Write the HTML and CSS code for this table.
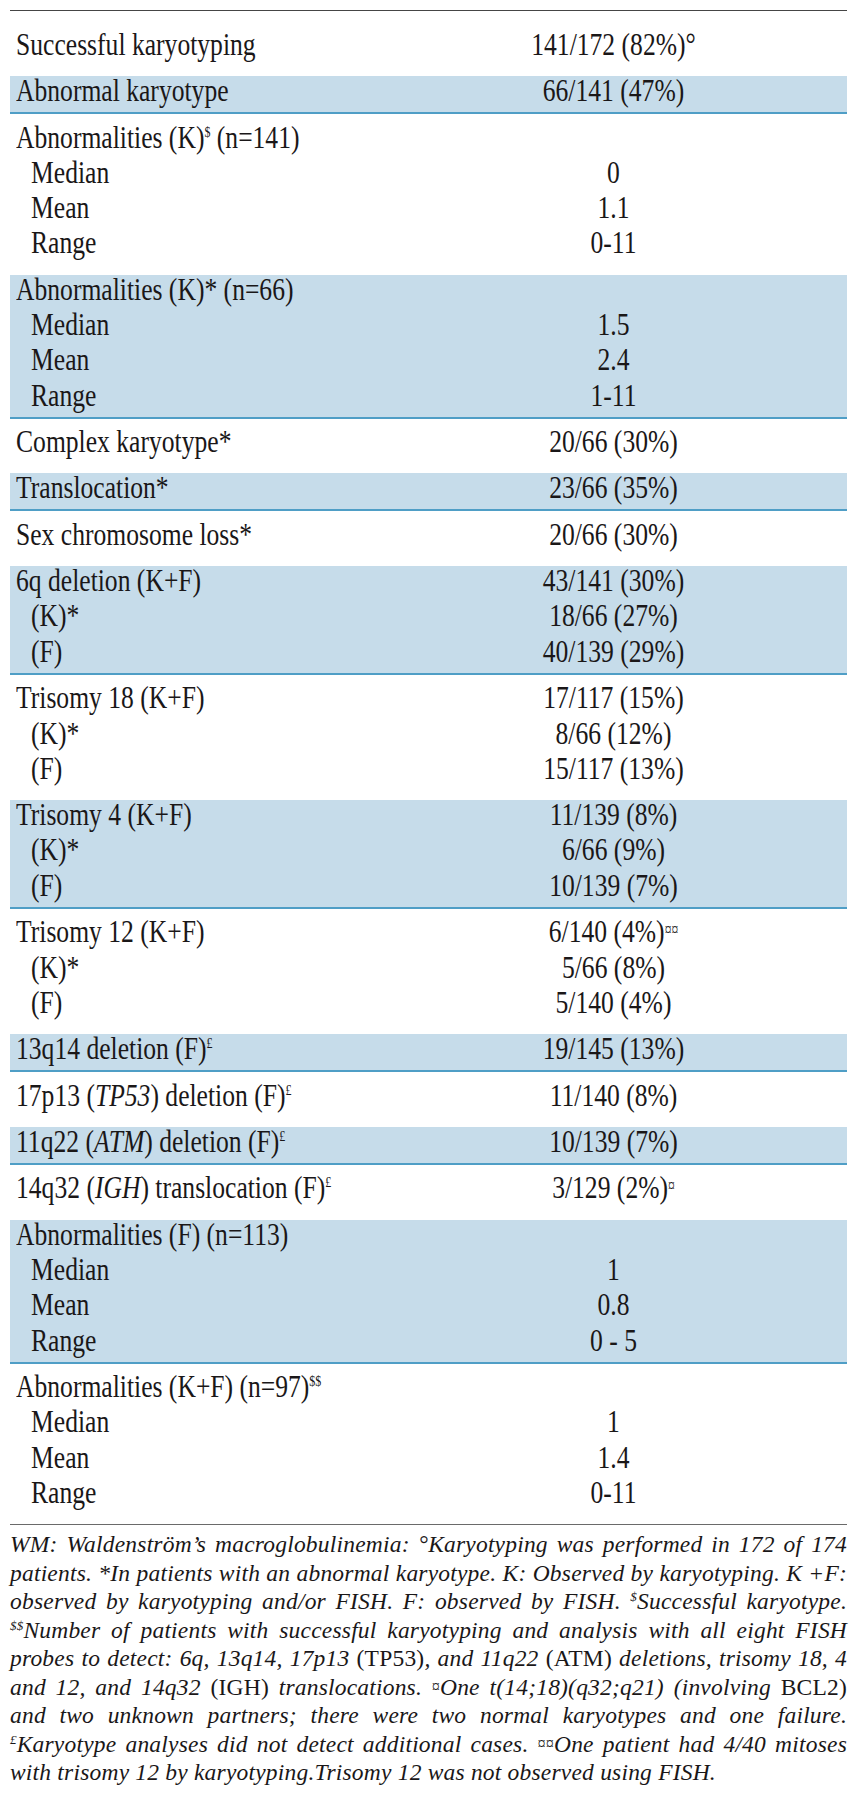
FILE: index.html
```html
<!DOCTYPE html>
<html lang="en">
<head>
<meta charset="utf-8">
<title>Cytogenetic findings in WM</title>
<link rel="stylesheet" href="styles.css">
</head>
<body>
<div class="page">
  <div class="tbl">
    <div class="grp first">
      <div class="ln"><div class="k">Successful karyotyping</div><div class="v">141/172 (82%)°</div></div>
    </div>
    <div class="grp band">
      <div class="ln"><div class="k">Abnormal karyotype</div><div class="v">66/141 (47%)</div></div>
    </div>
    <div class="grp">
      <div class="ln"><div class="k">Abnormalities (K)<span class="sp">$</span> (n=141)</div><div class="v"></div></div>
      <div class="ln sub"><div class="k">Median</div><div class="v">0</div></div>
      <div class="ln sub"><div class="k">Mean</div><div class="v">1.1</div></div>
      <div class="ln sub"><div class="k">Range</div><div class="v">0-11</div></div>
    </div>
    <div class="grp band">
      <div class="ln"><div class="k">Abnormalities (K)* (n=66)</div><div class="v"></div></div>
      <div class="ln sub"><div class="k">Median</div><div class="v">1.5</div></div>
      <div class="ln sub"><div class="k">Mean</div><div class="v">2.4</div></div>
      <div class="ln sub"><div class="k">Range</div><div class="v">1-11</div></div>
    </div>
    <div class="grp">
      <div class="ln"><div class="k">Complex karyotype*</div><div class="v">20/66 (30%)</div></div>
    </div>
    <div class="grp band">
      <div class="ln"><div class="k">Translocation*</div><div class="v">23/66 (35%)</div></div>
    </div>
    <div class="grp">
      <div class="ln"><div class="k">Sex chromosome loss*</div><div class="v">20/66 (30%)</div></div>
    </div>
    <div class="grp band">
      <div class="ln"><div class="k">6q deletion (K+F)</div><div class="v">43/141 (30%)</div></div>
      <div class="ln sub"><div class="k">(K)*</div><div class="v">18/66 (27%)</div></div>
      <div class="ln sub"><div class="k">(F)</div><div class="v">40/139 (29%)</div></div>
    </div>
    <div class="grp">
      <div class="ln"><div class="k">Trisomy 18 (K+F)</div><div class="v">17/117 (15%)</div></div>
      <div class="ln sub"><div class="k">(K)*</div><div class="v">8/66 (12%)</div></div>
      <div class="ln sub"><div class="k">(F)</div><div class="v">15/117 (13%)</div></div>
    </div>
    <div class="grp band">
      <div class="ln"><div class="k">Trisomy 4 (K+F)</div><div class="v">11/139 (8%)</div></div>
      <div class="ln sub"><div class="k">(K)*</div><div class="v">6/66 (9%)</div></div>
      <div class="ln sub"><div class="k">(F)</div><div class="v">10/139 (7%)</div></div>
    </div>
    <div class="grp">
      <div class="ln"><div class="k">Trisomy 12 (K+F)</div><div class="v">6/140 (4%)<span class="sp cur">¤¤</span></div></div>
      <div class="ln sub"><div class="k">(K)*</div><div class="v">5/66 (8%)</div></div>
      <div class="ln sub"><div class="k">(F)</div><div class="v">5/140 (4%)</div></div>
    </div>
    <div class="grp band">
      <div class="ln"><div class="k">13q14 deletion (F)<span class="sp">£</span></div><div class="v">19/145 (13%)</div></div>
    </div>
    <div class="grp">
      <div class="ln"><div class="k">17p13 (<i>TP53</i>) deletion (F)<span class="sp">£</span></div><div class="v">11/140 (8%)</div></div>
    </div>
    <div class="grp band">
      <div class="ln"><div class="k">11q22 (<i>ATM</i>) deletion (F)<span class="sp">£</span></div><div class="v">10/139 (7%)</div></div>
    </div>
    <div class="grp">
      <div class="ln"><div class="k">14q32 (<i>IGH</i>) translocation (F)<span class="sp">£</span></div><div class="v">3/129 (2%)<span class="sp cur">¤</span></div></div>
    </div>
    <div class="grp band">
      <div class="ln"><div class="k">Abnormalities (F) (n=113)</div><div class="v"></div></div>
      <div class="ln sub"><div class="k">Median</div><div class="v">1</div></div>
      <div class="ln sub"><div class="k">Mean</div><div class="v">0.8</div></div>
      <div class="ln sub"><div class="k">Range</div><div class="v">0 - 5</div></div>
    </div>
    <div class="grp">
      <div class="ln"><div class="k">Abnormalities (K+F) (n=97)<span class="sp">$$</span></div><div class="v"></div></div>
      <div class="ln sub"><div class="k">Median</div><div class="v">1</div></div>
      <div class="ln sub"><div class="k">Mean</div><div class="v">1.4</div></div>
      <div class="ln sub"><div class="k">Range</div><div class="v">0-11</div></div>
    </div>
  </div>
  <p class="fn">
    <span class="l">WM: Waldenström’s macroglobulinemia: °Karyotyping was performed in 172 of 174</span>
    <span class="l">patients. *In patients with an abnormal karyotype. K: Observed by karyotyping. K +F:</span>
    <span class="l">observed by karyotyping and/or FISH. F: observed by FISH. <span class="sp">$</span>Successful karyotype.</span>
    <span class="l"><span class="sp">$$</span>Number of patients with successful karyotyping and analysis with all eight FISH</span>
    <span class="l">probes to detect: 6q, 13q14, 17p13 <span class="r">(TP53)</span>, and 11q22 <span class="r">(ATM)</span> deletions, trisomy 18, 4</span>
    <span class="l">and 12, and 14q32 <span class="r">(IGH)</span> translocations. <span class="sp cur">¤</span>One t(14;18)(q32;q21) (involving <span class="r">BCL2)</span></span>
    <span class="l">and two unknown partners; there were two normal karyotypes and one failure.</span>
    <span class="l"><span class="sp">£</span>Karyotype analyses did not detect additional cases. <span class="sp cur">¤¤</span>One patient had 4/40 mitoses</span>
    <span class="l end">with trisomy 12 by karyotyping.Trisomy 12 was not observed using FISH.</span>
  </p>
</div>
</body>
</html>
```

FILE: styles.css
```css
html, body {
  margin: 0;
  padding: 0;
  background: #ffffff;
}

body {
  color: #1a1718;
  font-family: "Liberation Serif", "Times New Roman", serif;
}

.page {
  margin: 10px 6px 0 10px;
}

.tbl {
  border-top: 1px solid #454545;
  border-bottom: 1px solid #6a6a6a;
  font-size: 32px;
}

.grp {
  display: flex;
  flex-direction: column;
  gap: 6.3px;
  padding: 8.5px 0 17.3px;
}

.grp.first {
  padding-top: 19px;
  padding-bottom: 17px;
}

.grp.band {
  background: #c6dcea;
  border-bottom: 2px solid #4f9ec6;
  padding: 0 0 7px;
}

.ln {
  display: grid;
  grid-template-columns: 364px 1fr;
  padding-left: 6px;
  line-height: 29px;
}

.k {
  white-space: nowrap;
  transform: scaleX(0.8);
  transform-origin: 0 50%;
}

.ln.sub .k {
  margin-left: 15px;
}

.v {
  white-space: nowrap;
  text-align: center;
  transform: scaleX(0.8);
  transform-origin: 50% 50%;
}

.ln .sp {
  font-size: 15px;
  line-height: 0;
  vertical-align: 11px;
}

.ln .sp.cur {
  font-size: 17px;
  vertical-align: 7px;
}

.fn {
  margin: 5px 0 0;
  font-style: italic;
  font-size: 23.5px;
  line-height: 28.5px;
  letter-spacing: 0.2px;
}

.fn .l {
  display: block;
  text-align: justify;
  text-align-last: justify;
}

.fn .l.end {
  text-align-last: auto;
}

.fn .r {
  font-style: normal;
}

.fn .sp {
  font-size: 13px;
  line-height: 0;
  vertical-align: 8px;
}

.fn .sp.cur {
  font-size: 16px;
  vertical-align: 3px;
}
```
